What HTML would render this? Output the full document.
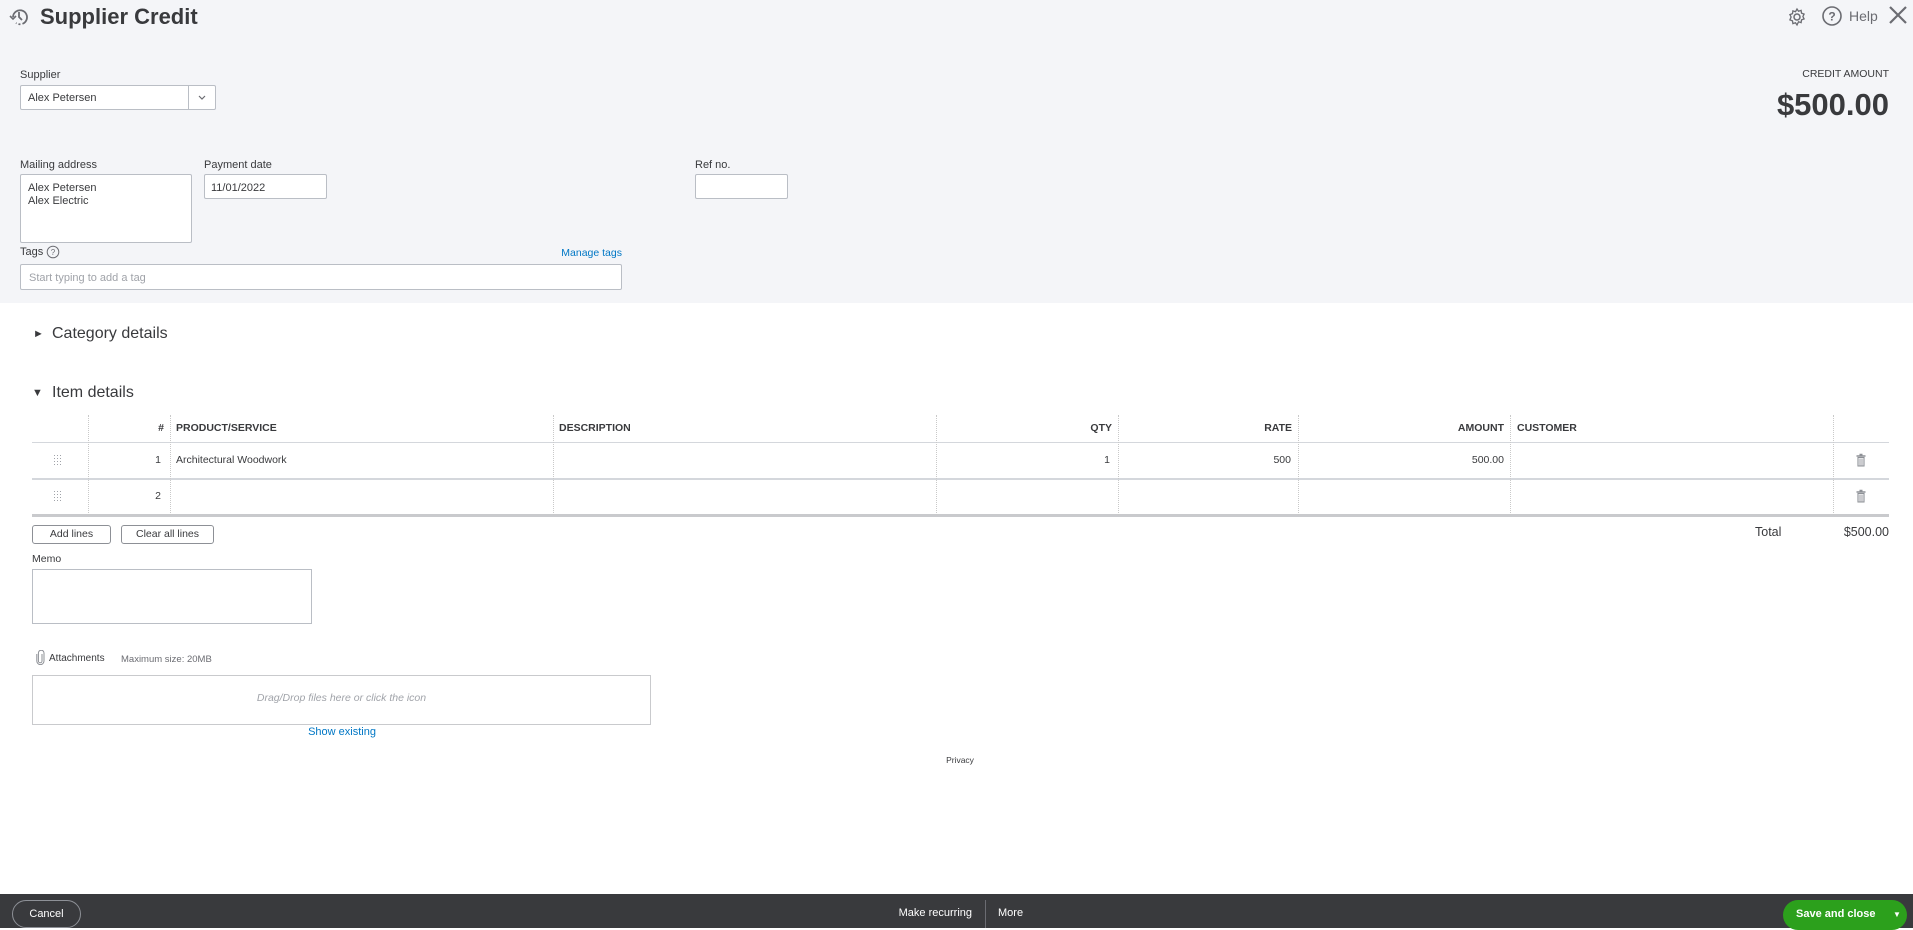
<!DOCTYPE html>
<html><head><meta charset="utf-8">
<style>
*{box-sizing:border-box;margin:0;padding:0}
body{width:1913px;height:928px;position:relative;overflow:hidden;background:#fff;font-family:"Liberation Sans",sans-serif;color:#393a3d;font-size:11px}
.a{position:absolute}
.hdr{left:0;top:0;width:1913px;height:303px;background:#f4f5f8}
.lbl{font-size:11px;color:#393a3d}
.box{position:absolute;background:#fff;border:1px solid #babec5;border-radius:2px}
.th{position:absolute;top:415px;height:27px;line-height:27px;font-size:10.5px;font-weight:bold;color:#393a3d}
.cell{position:absolute;font-size:10.5px;color:#393a3d}
.vl{position:absolute;width:0;border-left:1px dotted #c9c9c9}
.btn{position:absolute;border:1px solid #8d9096;border-radius:3px;background:#fff;font-size:10.5px;text-align:center;line-height:17px;color:#393a3d}
</style></head><body>
<div class="a hdr"></div>
<svg class="a" style="left:9px;top:7px" width="22" height="20" viewBox="0 0 22 20"><path d="M4 10a7 7 0 1 1 3 6" fill="none" stroke="#6b6c72" stroke-width="1.8" stroke-dasharray="30 2 2 2"/><path d="M10 5v5l3 3" fill="none" stroke="#6b6c72" stroke-width="1.8"/><path d="M1 9l3 3 3-3" fill="none" stroke="#6b6c72" stroke-width="1.6"/></svg>
<div class="a" style="left:40px;top:4px;font-size:22px;font-weight:bold;color:#393a3d">Supplier Credit</div>
<svg class="a" style="left:1787px;top:7px" width="20" height="20" viewBox="0 0 20 20"><circle cx="10" cy="10" r="3" fill="none" stroke="#6b6c72" stroke-width="1.5"/><path d="M10 2l1.5 2.2 2.6-.8.4 2.7 2.6 1-1.2 2.4 1.2 2.4-2.6 1-.4 2.7-2.6-.8L10 18l-1.5-2.2-2.6.8-.4-2.7-2.6-1L4.1 10 2.9 7.6l2.6-1 .4-2.7 2.6.8z" fill="none" stroke="#6b6c72" stroke-width="1.3"/></svg>
<svg class="a" style="left:1821px;top:5px" width="22" height="22" viewBox="0 0 22 22"><circle cx="11" cy="11" r="9" fill="none" stroke="#6b6c72" stroke-width="1.6"/><text x="11" y="15.5" text-anchor="middle" font-size="12" font-family="Liberation Sans" font-weight="bold" fill="#6b6c72">?</text></svg>
<div class="a" style="left:1849px;top:8px;font-size:14px;color:#6b6c72">Help</div>
<svg class="a" style="left:1888px;top:5px" width="20" height="20" viewBox="0 0 20 20"><path d="M2 2L18 18M18 2L2 18" stroke="#6b6c72" stroke-width="2.2"/></svg>

<div class="a lbl" style="left:20px;top:69px">Supplier</div>
<div class="box" style="left:20px;top:85px;width:196px;height:25px"></div>
<div class="a" style="left:188px;top:86px;width:1px;height:23px;background:#babec5"></div>
<div class="a" style="left:28px;top:92px;font-size:11px">Alex Petersen</div>
<svg class="a" style="left:197px;top:94px" width="10" height="8" viewBox="0 0 10 8"><path d="M2 2l3 3 3-3" fill="none" stroke="#6b6c72" stroke-width="1.2"/></svg>

<div class="a" style="right:24px;top:68px;font-size:10.5px;color:#393a3d">CREDIT AMOUNT</div>
<div class="a" style="right:24px;top:87px;font-size:31px;font-weight:bold;color:#393a3d">$500.00</div>

<div class="a lbl" style="left:20px;top:159px">Mailing address</div>
<div class="box" style="left:20px;top:174px;width:172px;height:69px"></div>
<div class="a" style="left:28px;top:182px;font-size:11px;line-height:13px">Alex Petersen<br>Alex Electric</div>
<div class="a lbl" style="left:204px;top:159px">Payment date</div>
<div class="box" style="left:204px;top:174px;width:123px;height:25px"></div>
<div class="a" style="left:211px;top:182px;font-size:11px">11/01/2022</div>
<div class="a lbl" style="left:695px;top:159px">Ref no.</div>
<div class="box" style="left:695px;top:174px;width:93px;height:25px"></div>

<div class="a lbl" style="left:20px;top:246px">Tags</div>
<svg class="a" style="left:46px;top:245px" width="14" height="14" viewBox="0 0 14 14"><circle cx="7" cy="7" r="5.8" fill="none" stroke="#6b6c72" stroke-width="1"/><text x="7" y="10" text-anchor="middle" font-size="8" font-family="Liberation Sans" fill="#6b6c72">?</text></svg>
<div class="a" style="right:1291px;top:247px;font-size:10.5px;color:#0077c5">Manage tags</div>
<div class="box" style="left:20px;top:264px;width:602px;height:26px"></div>
<div class="a" style="left:29px;top:272px;font-size:11px;color:#a0a3a9">Start typing to add a tag</div>

<div class="a" style="left:33px;top:328px;font-size:11px">&#9658;</div>
<div class="a" style="left:52px;top:325px;font-size:16px">Category details</div>
<div class="a" style="left:32px;top:387px;font-size:11px">&#9660;</div>
<div class="a" style="left:52px;top:384px;font-size:16px">Item details</div>

<div class="a" style="left:32px;top:442px;width:1857px;height:1px;background:#d4d7dc"></div>
<div class="a" style="left:32px;top:478px;width:1857px;height:2px;background:#d4d7dc"></div>
<div class="a" style="left:32px;top:514px;width:1857px;height:3px;background:#c9cacd"></div>
<div class="vl" style="left:88px;top:415px;height:100px"></div>
<div class="vl" style="left:170px;top:415px;height:100px"></div>
<div class="vl" style="left:553px;top:415px;height:100px"></div>
<div class="vl" style="left:936px;top:415px;height:100px"></div>
<div class="vl" style="left:1118px;top:415px;height:100px"></div>
<div class="vl" style="left:1298px;top:415px;height:100px"></div>
<div class="vl" style="left:1510px;top:415px;height:100px"></div>
<div class="vl" style="left:1833px;top:415px;height:100px"></div>
<div class="th" style="left:88px;width:76px;text-align:right">#</div>
<div class="th" style="left:176px">PRODUCT/SERVICE</div>
<div class="th" style="left:559px">DESCRIPTION</div>
<div class="th" style="left:936px;width:176px;text-align:right">QTY</div>
<div class="th" style="left:1118px;width:174px;text-align:right">RATE</div>
<div class="th" style="left:1298px;width:206px;text-align:right">AMOUNT</div>
<div class="th" style="left:1517px">CUSTOMER</div>
<svg class="a" style="left:54px;top:455px" width="8" height="10" viewBox="0 0 8 10"><g fill="#a0a3a9"><rect x="0" y="0" width="1" height="1"/><rect x="3" y="0" width="1" height="1"/><rect x="6" y="0" width="1" height="1"/><rect x="0" y="3" width="1" height="1"/><rect x="3" y="3" width="1" height="1"/><rect x="6" y="3" width="1" height="1"/><rect x="0" y="6" width="1" height="1"/><rect x="3" y="6" width="1" height="1"/><rect x="6" y="6" width="1" height="1"/><rect x="0" y="9" width="1" height="1"/><rect x="3" y="9" width="1" height="1"/><rect x="6" y="9" width="1" height="1"/></g></svg>
<svg class="a" style="left:54px;top:491px" width="8" height="10" viewBox="0 0 8 10"><g fill="#a0a3a9"><rect x="0" y="0" width="1" height="1"/><rect x="3" y="0" width="1" height="1"/><rect x="6" y="0" width="1" height="1"/><rect x="0" y="3" width="1" height="1"/><rect x="3" y="3" width="1" height="1"/><rect x="6" y="3" width="1" height="1"/><rect x="0" y="6" width="1" height="1"/><rect x="3" y="6" width="1" height="1"/><rect x="6" y="6" width="1" height="1"/><rect x="0" y="9" width="1" height="1"/><rect x="3" y="9" width="1" height="1"/><rect x="6" y="9" width="1" height="1"/></g></svg>
<div class="cell" style="left:88px;width:73px;text-align:right;top:454px">1</div>
<div class="cell" style="left:88px;width:73px;text-align:right;top:490px">2</div>
<div class="cell" style="left:176px;top:454px">Architectural Woodwork</div>
<div class="cell" style="left:936px;width:174px;text-align:right;top:454px">1</div>
<div class="cell" style="left:1118px;width:173px;text-align:right;top:454px">500</div>
<div class="cell" style="left:1298px;width:206px;text-align:right;top:454px">500.00</div>
<svg class="a" style="left:1855px;top:453px" width="12" height="14" viewBox="0 0 12 14"><path d="M1.5 3h9M4.5 1.5h3" stroke="#8d9096" stroke-width="1.4"/><path d="M3 4.5h6v8.5H3z" fill="none" stroke="#8d9096" stroke-width="1.1"/><path d="M5 5.5v7M7 5.5v7" stroke="#8d9096" stroke-width="0.9"/></svg>
<svg class="a" style="left:1855px;top:489px" width="12" height="14" viewBox="0 0 12 14"><path d="M1.5 3h9M4.5 1.5h3" stroke="#8d9096" stroke-width="1.4"/><path d="M3 4.5h6v8.5H3z" fill="none" stroke="#8d9096" stroke-width="1.1"/><path d="M5 5.5v7M7 5.5v7" stroke="#8d9096" stroke-width="0.9"/></svg>

<div class="btn" style="left:32px;top:525px;width:79px;height:19px">Add lines</div>
<div class="btn" style="left:121px;top:525px;width:93px;height:19px">Clear all lines</div>
<div class="a" style="left:1755px;top:525px;font-size:12.5px">Total</div>
<div class="a" style="right:24px;top:525px;font-size:12.5px">$500.00</div>

<div class="a lbl" style="left:32px;top:553px;font-size:10.5px">Memo</div>
<div class="box" style="left:32px;top:569px;width:280px;height:55px;border-radius:0"></div>

<svg class="a" style="left:36px;top:650px" width="9" height="15" viewBox="0 0 9 15"><path d="M6 4v7a1.8 1.8 0 0 1-3.6 0V3a2.8 2.8 0 0 1 5.6 0v8a3.6 3.6 0 0 1-7.2 0V4" fill="none" stroke="#8d9096" stroke-width="1"/></svg>
<div class="a" style="left:49px;top:653px;font-size:10px">Attachments</div>
<div class="a" style="left:121px;top:654px;font-size:9.5px;color:#6b6c72">Maximum size: 20MB</div>
<div class="box" style="left:32px;top:675px;width:619px;height:50px;border-radius:0;border-color:#c9cacd"></div>
<div class="a" style="left:32px;top:692px;width:619px;text-align:center;font-size:10.5px;font-style:italic;color:#a0a3a9">Drag/Drop files here or click the icon</div>
<div class="a" style="left:242px;top:726px;width:200px;text-align:center;font-size:11px;color:#0077c5">Show existing</div>
<div class="a" style="left:900px;top:755px;width:120px;text-align:center;font-size:8.5px;color:#393a3d">Privacy</div>

<div class="a" style="left:0;top:894px;width:1913px;height:34px;background:#393a3d"></div>
<div class="a" style="left:12px;top:900px;width:69px;height:28px;border:1px solid #8d9096;border-radius:14px;color:#fff;font-size:11px;text-align:center;line-height:26px">Cancel</div>
<div class="a" style="left:860px;top:907px;width:112px;text-align:right;color:#fff;font-size:11px">Make recurring</div>
<div class="a" style="left:985px;top:900px;width:1px;height:28px;background:#6b6c72"></div>
<div class="a" style="left:998px;top:907px;color:#fff;font-size:11px">More</div>
<div class="a" style="left:1783px;top:900px;width:124px;height:30px;background:#2ca01c;border-radius:15px"></div>
<div class="a" style="left:1796px;top:908px;color:#fff;font-size:11px;font-weight:bold">Save and close</div>
<div class="a" style="left:1893px;top:910px;color:#fff;font-size:8px">&#9660;</div>
</body></html>
